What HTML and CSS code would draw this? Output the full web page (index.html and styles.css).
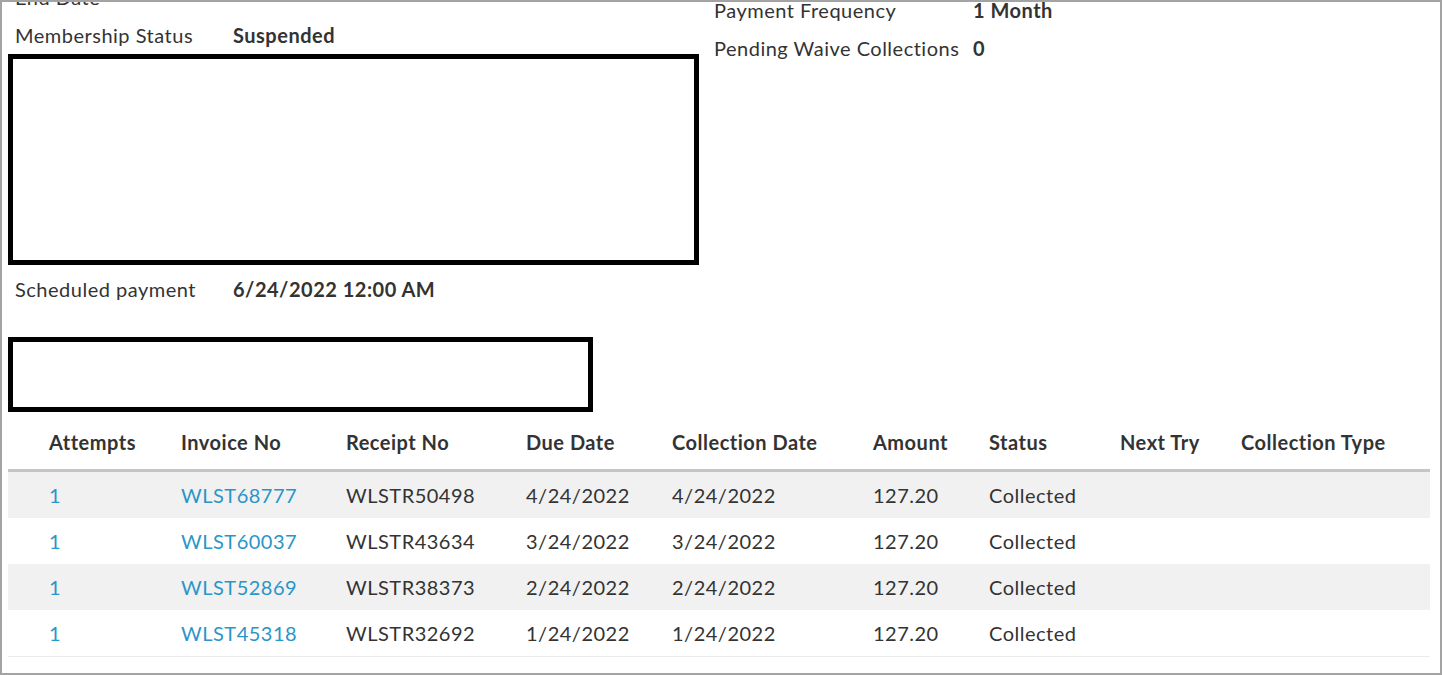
FILE: index.html
```html
<!DOCTYPE html>
<html>
<head>
<meta charset="utf-8">
<link rel="stylesheet" href="styles.css">
</head>
<body>
<div class="frame">
  <div class="content">
    <div class="top">
      <div class="col-left">
        <div class="row"><span class="label">End Date</span><span class="value"></span></div>
        <div class="row"><span class="label">Membership Status</span><span class="value">Suspended</span></div>
        <div class="redact redact-big"></div>
        <div class="row row-sched"><span class="label">Scheduled payment</span><span class="value">6/24/2022 12:00 AM</span></div>
        <div class="redact redact-small"></div>
      </div>
      <div class="col-right">
        <div class="row"><span class="label label-r">Payment Frequency</span><span class="value">1 Month</span></div>
        <div class="row"><span class="label label-r">Pending Waive Collections</span><span class="value">0</span></div>
      </div>
    </div>
    <table class="grid">
      <colgroup>
        <col class="c1"><col class="c2"><col class="c3"><col class="c4"><col class="c5"><col class="c6"><col class="c7"><col class="c8"><col class="c9">
      </colgroup>
      <thead>
        <tr>
          <th class="first">Attempts</th><th>Invoice No</th><th>Receipt No</th><th>Due Date</th><th>Collection Date</th><th>Amount</th><th>Status</th><th>Next Try</th><th>Collection Type</th>
        </tr>
      </thead>
      <tbody>
        <tr class="alt"><td class="first link">1</td><td class="link">WLST68777</td><td>WLSTR50498</td><td>4/24/2022</td><td>4/24/2022</td><td>127.20</td><td>Collected</td><td></td><td></td></tr>
        <tr><td class="first link">1</td><td class="link">WLST60037</td><td>WLSTR43634</td><td>3/24/2022</td><td>3/24/2022</td><td>127.20</td><td>Collected</td><td></td><td></td></tr>
        <tr class="alt"><td class="first link">1</td><td class="link">WLST52869</td><td>WLSTR38373</td><td>2/24/2022</td><td>2/24/2022</td><td>127.20</td><td>Collected</td><td></td><td></td></tr>
        <tr class="last"><td class="first link">1</td><td class="link">WLST45318</td><td>WLSTR32692</td><td>1/24/2022</td><td>1/24/2022</td><td>127.20</td><td>Collected</td><td></td><td></td></tr>
      </tbody>
    </table>
  </div>
</div>
</body>
</html>
```
FILE: styles.css
```css
html, body {
  margin: 0;
  padding: 0;
  background: #ffffff;
}
body {
  font-family: Lato, "Open Sans", sans-serif;
  font-size: 20px;
  letter-spacing: 0.5px;
  color: #333333;
}
.frame {
  width: 1442px;
  height: 675px;
  box-sizing: border-box;
  border: 2px solid #a3a3a3;
  overflow: hidden;
  padding: 0 10px 0 6px;
}
.content {
  margin-top: -24px;
}
.top {
  display: flex;
}
.col-left {
  width: 706px;
  flex: none;
}
.col-right {
  flex: 1;
  margin-top: 13px;
}
.row {
  display: flex;
  height: 38px;
  line-height: 38px;
  white-space: nowrap;
}
.label {
  width: 218px;
  padding-left: 7px;
  flex: none;
}
.label-r {
  width: 259px;
  padding-left: 0;
}
.value {
  font-weight: bold;
}
.redact {
  box-sizing: border-box;
  border: 5px solid #000;
}
.redact-big {
  width: 691px;
  height: 211px;
}
.redact-small {
  width: 585px;
  height: 75px;
  margin-top: 29px;
}
.row-sched {
  margin-top: 5px;
  margin-bottom: 1px;
}
.grid {
  width: 1422px;
  border-collapse: collapse;
  table-layout: fixed;
}
.c1 { width: 173px; }
.c2 { width: 165px; }
.c3 { width: 180px; }
.c4 { width: 146px; }
.c5 { width: 201px; }
.c6 { width: 116px; }
.c7 { width: 131px; }
.c8 { width: 121px; }
.c9 { width: 189px; }
.grid th {
  text-align: left;
  font-weight: bold;
  height: 54px;
  padding: 3px 0 0 0;
  border-bottom: 3px solid #c2c6ca;
  white-space: nowrap;
}
.grid td {
  height: 46px;
  padding: 0;
  white-space: nowrap;
}
.grid .first {
  padding-left: 41px;
}
.grid tr.alt td {
  background: #f1f1f1;
}
.grid tr.last td {
  border-bottom: 1px solid #ebebeb;
}
.grid td.link {
  color: #2b95c9;
}
```
